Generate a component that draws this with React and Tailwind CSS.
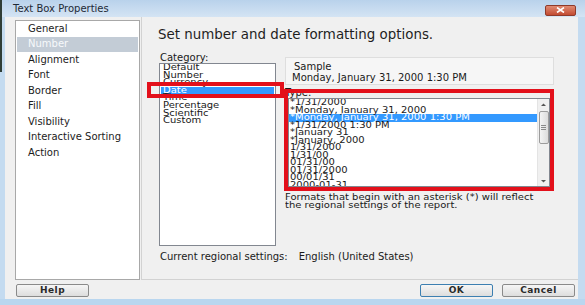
import React from "react";

const navItems = [
  "General",
  "Number",
  "Alignment",
  "Font",
  "Border",
  "Fill",
  "Visibility",
  "Interactive Sorting",
  "Action",
];

const categories = [
  "Default",
  "Number",
  "Currency",
  "Date",
  "Time",
  "Percentage",
  "Scientific",
  "Custom",
];

const formats = [
  "*1/31/2000",
  "*Monday, January 31, 2000",
  "*Monday, January 31, 2000 1:30 PM",
  "*1/31/2000 1:30 PM",
  "*January 31",
  "*January, 2000",
  "1/31/2000",
  "1/31/00",
  "01/31/00",
  "01/31/2000",
  "00/01/31",
  "2000-01-31",
];

function DialogButton({ label, isDefault, className = "" }) {
  return (
    <button
      className={
        "block w-[73px] h-[13px] rounded-[2px] border bg-gradient-to-b from-[#f6f6f6] to-[#dddddd] text-[9px] leading-[11px] font-bold text-[#2a2a2a] tracking-[0.5px] " +
        (isDefault ? "border-[#3c7fb1] " : "border-[#8a8a8a] ") +
        className
      }
    >
      {label}
    </button>
  );
}

function ScrollBar() {
  return (
    <div className="w-[12px] h-full flex flex-col items-center bg-[#f0f0f0] border-l border-[#e4e4e4]">
      <svg width="7" height="9" viewBox="0 0 7 9" className="mt-[1px]">
        <path d="M1 6 L3.5 3.5 L6 6 Z" fill="#555" />
      </svg>
      <div className="w-[10px] h-[33px] mt-[2px] rounded-[2px] border border-[#9c9c9c] bg-gradient-to-r from-[#f4f4f4] to-[#dcdcdc] flex flex-col items-center justify-center gap-[1px]">
        <div className="w-[5px] h-[1px] bg-[#8a8a8a]" />
        <div className="w-[5px] h-[1px] bg-[#8a8a8a]" />
        <div className="w-[5px] h-[1px] bg-[#8a8a8a]" />
      </div>
      <div className="flex-1" />
      <svg width="7" height="7" viewBox="0 0 7 7" className="mb-[1px]">
        <path d="M1 2 L3.5 4.5 L6 2 Z" fill="#555" />
      </svg>
    </div>
  );
}

export default function App() {
  return (
    <div
      className="relative w-[585px] h-[305px] overflow-hidden bg-[#c4dbf0] text-[#1a1a1a] flex flex-col"
      style={{ fontFamily: '"DejaVu Sans", Verdana, sans-serif' }}
    >
      {/* Title bar */}
      <div className="h-[17px] flex items-center bg-gradient-to-b from-[#b9d2eb] to-[#d4e4f4]">
        <div className="w-[2px] h-full bg-[#2f3d36]" />
        <span className="ml-[11px] text-[10px] leading-[12px] text-[#1e2a36]">
          Text Box Properties
        </span>
        <div className="flex-1" />
        <div className="mr-[9px] mt-[3px] w-[31px] h-[11px] rounded-[2px] border border-[#8e3a2a] bg-gradient-to-b from-[#e08a72] to-[#c24a30] flex items-center justify-center">
          <svg width="9" height="6" viewBox="0 0 9 6">
            <path d="M1 0.5 L8 5.5 M8 0.5 L1 5.5" stroke="#fff" strokeWidth="1.6" />
          </svg>
        </div>
      </div>

      {/* Body */}
      <div className="flex h-[282px]">
        <div className="w-[5px] flex">
          <div className="w-[2px] h-[55px] bg-[#2f3d36]" />
        </div>

        <div className="w-[573px] bg-[#f0f0f0] flex flex-col">
          <div className="flex items-start">
            {/* Nav list */}
            <div className="ml-[10px] mt-[3px] w-[125px] h-[260px] bg-white border border-[#a8a8a8] flex flex-col">
              {navItems.map((item) => (
                <div
                  key={item}
                  className={
                    "h-[15.5px] mx-[1px] pl-[11px] flex items-center text-[10px] leading-[12px] " +
                    (item === "Number"
                      ? "bg-[#c3ccd6] text-[#f7f9fb]"
                      : "text-[#1c1c1c]")
                  }
                >
                  {item}
                </div>
              ))}
            </div>

            {/* Right panel */}
            <div className="ml-[1px] w-[437px] h-[263px] border-l border-b border-[#d2d2d2] flex flex-col">
              <h1 className="ml-[16px] mt-[10px] text-[13.4px] leading-[16px] font-normal text-[#1e1e1e]">
                Set number and date formatting options.
              </h1>

              <div className="ml-[17px] mt-[9px] flex items-start">
                {/* Category */}
                <div className="w-[117px] flex flex-col">
                  <div className="pl-[1px] text-[10px] leading-[11px]">Category:</div>
                  <div className="h-[183px] bg-white border border-[#828790] pl-[1px] pr-[1px] overflow-hidden">
                    {categories.map((c) => (
                      <div
                        key={c}
                        className={
                          "h-[7.6px] pl-[2px] text-[10px] leading-[7.6px] whitespace-nowrap " +
                          (c === "Date" ? "bg-[#3399ff] text-white" : "")
                        }
                      >
                        <span className="inline-block scale-y-[0.8]">{c}</span>
                      </div>
                    ))}
                  </div>
                </div>

                {/* Sample and type */}
                <div className="ml-[9px] w-[269px] flex flex-col">
                  <div className="mt-[5px] h-[28px] bg-[#f6f6f6] border border-[#dedede] flex flex-col">
                    <div className="ml-[8px] mt-[3px] text-[10px] leading-[11px]">Sample</div>
                    <div className="ml-[6px] text-[10px] leading-[11px]">
                      Monday, January 31, 2000 1:30 PM
                    </div>
                  </div>
                  <div className="mt-[3px] text-[10px] leading-[10px]">Type:</div>
                  <div className="ml-[3px] w-[262px] h-[89px] bg-white border border-[#828790] flex overflow-hidden">
                    <div className="flex-1 overflow-hidden">
                      {formats.map((f, i) => (
                        <div
                          key={f}
                          className={
                            "h-[7.5px] pl-[1px] text-[10px] leading-[7.5px] whitespace-nowrap " +
                            (i === 2 ? "bg-[#3399ff] text-white" : "")
                          }
                        >
                          <span className="inline-block scale-y-[0.8]">{f}</span>
                        </div>
                      ))}
                    </div>
                    <ScrollBar />
                  </div>
                  <div className="mt-[6px] text-[10px] leading-[8px] text-[#1a1a1a] whitespace-nowrap">
                    <div className="h-[8px] scale-y-[0.85]">
                      Formats that begin with an asterisk (*) will reflect
                    </div>
                    <div className="h-[8px] scale-y-[0.85]">
                      the regional settings of the report.
                    </div>
                  </div>
                </div>
              </div>

              <div className="ml-[18px] mt-[6px] flex text-[10px] leading-[10px]">
                <span>Current regional settings:</span>
                <span className="ml-[11px]">English (United States)</span>
              </div>
            </div>
          </div>

          {/* Buttons */}
          <div className="mt-[4px] flex items-start">
            <DialogButton label="Help" className="ml-[11px]" />
            <div className="flex-1" />
            <DialogButton label="OK" isDefault />
            <DialogButton label="Cancel" className="ml-[9px] mr-[3px]" />
          </div>
        </div>

        <div className="w-[7px] bg-[#c4dbf0]" />
      </div>

      <div className="h-[6px] bg-[#b9d6ef]" />

      {/* Red annotation boxes */}
      <div className="absolute left-[147px] top-[82px] w-[137px] h-[16px] border-[4px] border-[#e3101b]" />
      <div className="absolute left-[284px] top-[89px] w-[270px] h-[102px] border-[4px] border-[#e3101b]" />
    </div>
  );
}
